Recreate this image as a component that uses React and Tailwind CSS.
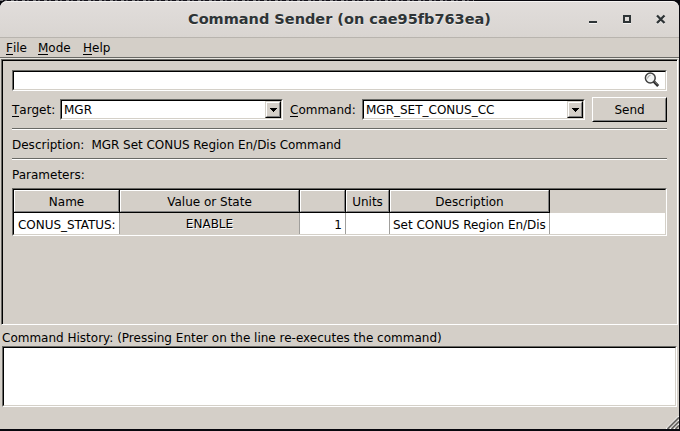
import React from "react";

// Two-pixel sunken frame in the classic Windows style.
function Sunken({ className = "", inner = "", children }) {
  return (
    <div className={`border border-t-[#696965] border-l-[#696965] border-r-white border-b-white ${className}`}>
      <div className={`h-full border border-t-black border-l-black border-r-[#d4d0c8] border-b-[#d4d0c8] ${inner}`}>
        {children}
      </div>
    </div>
  );
}

function Mnemonic({ text }) {
  return (
    <span className="whitespace-pre">
      <span className="inline-block h-[14px] border-b border-black leading-[14px]">{text[0]}</span>
      {text.slice(1)}
    </span>
  );
}

function Combo({ value }) {
  return (
    <Sunken className="h-[21px] w-[223px] shrink-0" inner="flex justify-between bg-white">
      <span className="pl-[2px] leading-[18px]">{value}</span>
      <div className="h-[17px] w-[16px] border border-t-[#d4d0c8] border-l-[#d4d0c8] border-r-black border-b-black">
        <div className="flex h-full items-center justify-center border border-t-white border-l-white border-r-[#808080] border-b-[#808080] bg-[#d4cfc8]">
          <svg width="7" height="4" viewBox="0 0 7 4" shapeRendering="crispEdges">
            <path d="M0 0H7V1H6V2H5V3H4V4H3V3H2V2H1V1H0Z" />
          </svg>
        </div>
      </div>
    </Sunken>
  );
}

function Separator({ className = "" }) {
  return <div className={`h-[2px] shrink-0 border-t border-b border-t-[#696965] border-b-white ${className}`} />;
}

const columns = [
  { label: "Name", width: "w-[106px]" },
  { label: "Value or State", width: "w-[180px]" },
  { label: "", width: "w-[46px]" },
  { label: "Units", width: "w-[44px]" },
  { label: "Description", width: "w-[160px]" },
];

function TitleBar() {
  return (
    <div className="flex h-[37px] shrink-0 rounded-t-[7px] border-t border-b border-t-[#f5f3f2] border-b-[#b8b4ae] bg-linear-to-b from-[#e1dddb] to-[#d9d5d1] text-[#2e3436]">
      <div className="w-[188px]" />
      <div className="w-[303px] whitespace-nowrap text-[14.5px] leading-[34px] font-bold [text-shadow:0_1px_#f0eeec]">
        Command Sender (on cae95fb763ea)
      </div>
      <svg className="ml-auto" width="90" height="35" viewBox="589 2 90 35">
        <path d="M589 23.5H597" stroke="#f4f2f1" />
        <path d="M589 21H597V23H589Z" fill="#2e3436" />
        <path d="M623 23.5H631" stroke="#f4f2f1" />
        <path d="M624 16H630V22H624Z" fill="none" stroke="#2e3436" strokeWidth="2" />
        <path d="M657 16.5L664.5 24M664.5 16.5L657 24" stroke="#f4f2f1" strokeWidth="2" />
        <path d="M657 15.5L664.5 23M664.5 15.5L657 23" stroke="#2e3436" strokeWidth="2.3" />
      </svg>
    </div>
  );
}

function ParameterTable() {
  return (
    <Sunken className="h-[48px] shrink-0" inner="bg-white">
      <div className="flex h-[23px] bg-[#d4cfc8]">
        {columns.map((c, i) => (
          <div key={i} className={`${c.width} border-r border-b border-black`}>
            <div className="h-full border border-t-white border-l-white border-r-[#808080] border-b-[#808080] text-center leading-[23px]">
              {c.label}
            </div>
          </div>
        ))}
      </div>
      <div className="flex h-[21px] leading-[25px] whitespace-nowrap">
        <div className="w-[106px] border-r border-[#a09f9c] pl-[4px] tracking-[-0.05px]">CONUS_STATUS:</div>
        <div className="w-[180px] border-r border-[#a09f9c] bg-[#d4cfc8] text-center leading-[23px] [text-shadow:1px_1px_#fff]">ENABLE</div>
        <div className="w-[46px] border-r border-[#a09f9c] pr-[3px] text-right">1</div>
        <div className="w-[44px] border-r border-[#a09f9c]" />
        <div className="w-[160px] border-r border-[#a09f9c] pl-[3px] tracking-[-0.03px]">Set CONUS Region En/Dis</div>
      </div>
    </Sunken>
  );
}

export default function App() {
  return (
    <div className="h-[431px] w-[680px] overflow-hidden bg-[#08080e] pr-px pb-[2px] font-['DejaVu_Sans',sans-serif] text-[12px] text-black">
      <div className="h-px w-[474px] bg-[repeating-linear-gradient(90deg,#77777a_0_3px,#14121a_3px_5px,#55555a_5px_7px,#14121a_7px_11px)]" />
      <div className="flex h-[428px] flex-col rounded-t-[7px] bg-[#d4cfc8]">
        <TitleBar />
        <div className="flex h-[19px] shrink-0 pl-[6px] leading-[21px]">
          <div className="w-[32px]"><Mnemonic text="File" /></div>
          <div className="w-[45px]"><Mnemonic text="Mode" /></div>
          <Mnemonic text="Help" />
        </div>
        <div className="h-[2px] shrink-0 border-t border-b border-t-[#696965] border-b-[#e8e6e0]" />

        <div className="mr-px ml-px h-[266px] shrink-0 border border-t-[#696965] border-l-[#696965] border-r-white border-b-white">
          <div className="flex h-full flex-col border-t border-l border-black pt-[9px] pr-[10px] pl-[9px]">
            <Sunken className="h-[21px] shrink-0" inner="flex justify-end bg-white pr-[5px]">
              <svg width="16" height="16" viewBox="0 0 16 16">
                <circle cx="6.3" cy="6" r="4.9" fill="#f1f3f3" stroke="#404040" strokeWidth="1.5" />
                <path d="M3.6 6.5Q3.6 3.6 6.5 3.4" fill="none" stroke="#909090" strokeWidth=".9" />
                <path d="M9.8 9.5L14.2 14" stroke="#303030" strokeWidth="2.8" />
                <path d="M10.5 9.5L13.5 12.6" stroke="#999" strokeWidth=".6" />
              </svg>
            </Sunken>

            <div className="mt-[6px] flex h-[25px] shrink-0 items-center">
              <div className="w-[48px] shrink-0"><Mnemonic text="Target:" /></div>
              <Combo value="MGR" />
              <div className="w-[79px] shrink-0 pl-[7px]"><Mnemonic text="Command:" /></div>
              <Combo value="MGR_SET_CONUS_CC" />
              <div className="ml-auto h-[25px] w-[75px] border border-t-white border-l-white border-r-black border-b-black">
                <div className="h-full border border-t-[#d4cfc8] border-l-[#d4cfc8] border-r-[#808080] border-b-[#808080] text-center leading-[23px]">Send</div>
              </div>
            </div>

            <Separator className="mt-[6px]" />
            <div className="flex h-[28px] shrink-0 gap-[7px] leading-[30px]">
              <span>Description:</span>
              <span className="tracking-[-0.03px]">MGR Set CONUS Region En/Dis Command</span>
            </div>
            <Separator />
            <div className="h-[28px] shrink-0 leading-[31px]">Parameters:</div>
            <ParameterTable />
          </div>
        </div>

        <div className="h-[21px] shrink-0 pl-[2px] leading-[27px]">
          Command History: (Pressing Enter on the line re-executes the command)
        </div>
        <Sunken className="mr-[2px] ml-[2px] h-[61px] shrink-0" inner="bg-white" />
        <div className="flex flex-1 items-end justify-end">
          <svg width="13" height="13" viewBox="0 0 13 13">
            <path d="M0 13L13 0M4 13L13 4M8 13L13 8" stroke="#fff" strokeWidth="1.2" />
            <path d="M1.5 13L13 1.5M5.5 13L13 5.5M9.5 13L13 9.5" stroke="#6b6965" strokeWidth="1.8" />
          </svg>
        </div>
      </div>
    </div>
  );
}
